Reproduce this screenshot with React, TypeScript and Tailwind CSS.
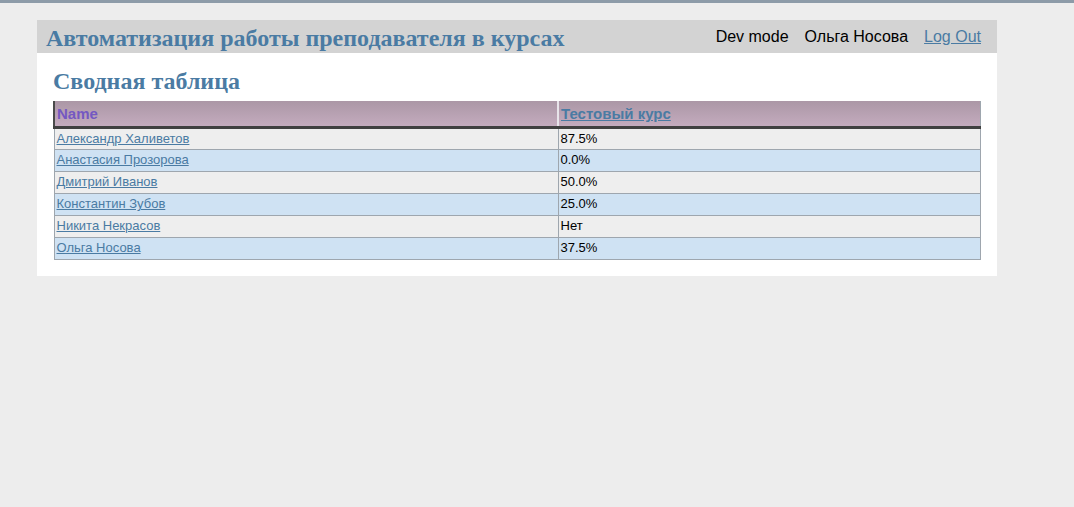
const rows: [string, string][] = [
  ["Александр Халиветов", "87.5%"],
  ["Анастасия Прозорова", "0.0%"],
  ["Дмитрий Иванов", "50.0%"],
  ["Константин Зубов", "25.0%"],
  ["Никита Некрасов", "Нет"],
  ["Ольга Носова", "37.5%"],
];

export default function App() {
  return (
    <div className="min-h-[507px] bg-[#ededed] border-t-[3px] border-[#8d9ba8] font-['Liberation_Sans',Arial,sans-serif]">
      <div className="w-[960px] ml-[37px] mt-[17px] bg-white pb-4">
        <div className="h-[33px] bg-[#d3d3d3] flex items-center justify-between pl-[9px] pr-4">
          <h1 className="font-['Liberation_Serif','Times_New_Roman',serif] font-bold text-[24px] text-[#4a7ba3] leading-none pt-[3px]">
            Автоматизация работы преподавателя в курсах
          </h1>
          <div className="flex items-center gap-4 text-[16px] text-black">
            <span>Dev mode</span>
            <span>Ольга Носова</span>
            <a href="#" className="text-[#4a7ba3] underline">Log Out</a>
          </div>
        </div>
        <div className="px-4 pt-[16px]">
          <h2 className="font-['Liberation_Serif','Times_New_Roman',serif] font-bold text-[24px] text-[#4a7ba3] leading-none mb-[8px]">
            Сводная таблица
          </h2>
          <table className="w-[928px] border-collapse text-[13px]">
            <thead>
              <tr className="h-[26px] bg-linear-to-b from-[#ab97a6] to-[#c5acbf]">
                <th className="w-[504px] text-left font-bold text-[15px] pl-[2px] pt-[2px] border-l-2 border-l-[#4a4a4a] border-b-[3px] border-b-[#404040] border-r-2 border-r-[#e8e4ea] text-[#7458c2]">
                  Name
                </th>
                <th className="text-left font-bold text-[15px] pl-[2px] pt-[2px] border-b-[3px] border-b-[#404040] border-r border-r-[#9ea6ae]">
                  <a href="#" className="text-[#4a7ba3] underline">Тестовый курс</a>
                </th>
              </tr>
            </thead>
            <tbody>
              {rows.map(([name, score], i) => (
                <tr key={name} className={`h-[22px] ${i % 2 === 0 ? "bg-[#eeeeee]" : "bg-[#cfe2f3]"}`}>
                  <td className="border border-[#9ea6ae] pl-[2px]">
                    <a href="#" className="text-[#4a7ba3] underline">{name}</a>
                  </td>
                  <td className="border border-[#9ea6ae] pl-[2px] text-black">{score}</td>
                </tr>
              ))}
            </tbody>
          </table>
        </div>
      </div>
    </div>
  );
}
